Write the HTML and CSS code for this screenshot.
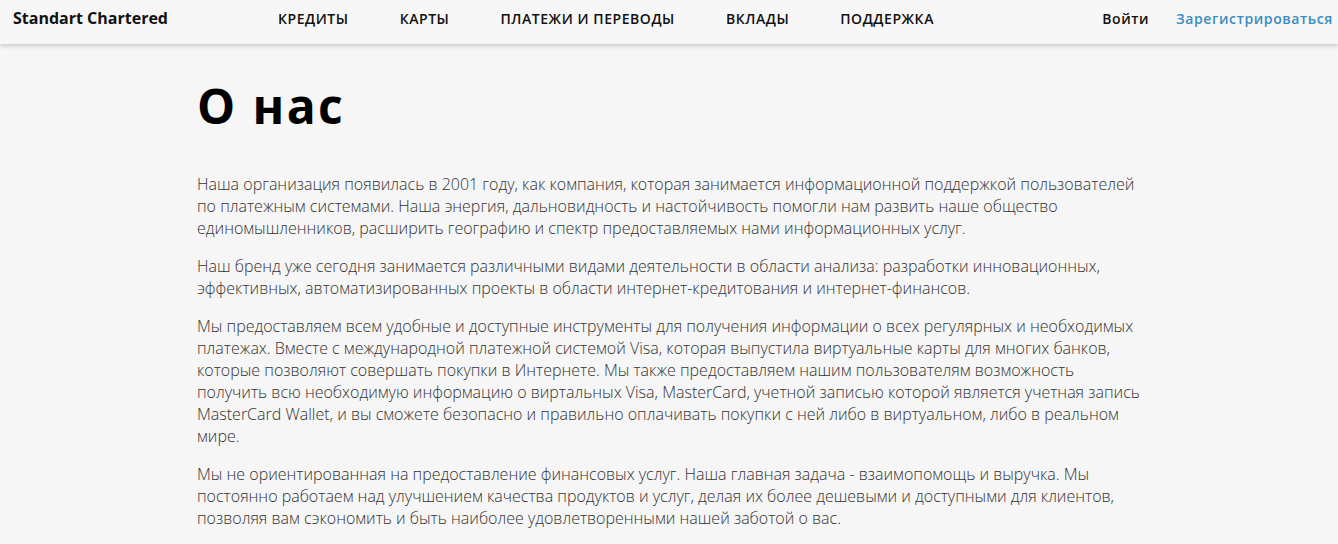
FILE: index.html
```html
<!DOCTYPE html>
<html lang="ru">
<head>
    <meta charset="UTF-8">
    <meta name="viewport" content="width=device-width, initial-scale=1.0">
    <title>О нас</title>
    <link rel="stylesheet" href="styles.css">
</head>
<body>
    <header class="header">
        <a class="logo" href="#">Standart Chartered</a>
        <nav class="nav">
            <a href="#">Кредиты</a>
            <a href="#">Карты</a>
            <a href="#">Платежи и переводы</a>
            <a href="#">Вклады</a>
            <a href="#">Поддержка</a>
        </nav>
        <div class="auth">
            <a class="login" href="#">Войти</a>
            <a class="register" href="#">Зарегистрироваться</a>
        </div>
    </header>

    <main class="about">
        <h1>О нас</h1>
        <p>Наша организация появилась в 2001 году, как компания, которая занимается информационной поддержкой пользователей по платежным системами. Наша энергия, дальновидность и настойчивость помогли нам развить наше общество единомышленников, расширить географию и спектр предоставляемых нами информационных услуг.</p>
        <p>Наш бренд уже сегодня занимается различными видами деятельности в области анализа: разработки инновационных, эффективных, автоматизированных проекты в области интернет-кредитования и интернет-финансов.</p>
        <p>Мы предоставляем всем удобные и доступные инструменты для получения информации о всех регулярных и необходимых платежах. Вместе с международной платежной системой Visa, которая выпустила виртуальные карты для многих банков, которые позволяют совершать покупки в Интернете. Мы также предоставляем нашим пользователям возможность получить всю необходимую информацию о виртальных Visa, MasterCard, учетной записью которой является учетная запись MasterCard Wallet, и вы сможете безопасно и правильно оплачивать покупки с ней либо в виртуальном, либо в реальном мире.</p>
        <p>Мы не ориентированная на предоставление финансовых услуг. Наша главная задача - взаимопомощь и выручка. Мы постоянно работаем над улучшением качества продуктов и услуг, делая их более дешевыми и доступными для клиентов, позволяя вам сэкономить и быть наиболее удовлетворенными нашей заботой о вас.</p>
    </main>
</body>
</html>
```

FILE: styles.css
```css
body {
    font-family: 'Open Sans', 'Noto Sans', sans-serif;
    background: #f6f6f6;
    color: #333;
    margin: 0;
}

a {
    text-decoration: none;
}

.header {
    height: 44px;
    box-sizing: border-box;
    display: flex;
    align-items: center;
    padding: 0 5px 8px 13px;
    background: #f7f7f7;
    box-shadow: 0 2px 4px rgba(0,0,0,0.18);
}

.logo {
    font-size: 16px;
    font-weight: 700;
    color: #111;
    width: 265px;
}

.nav {
    display: flex;
    gap: 51px;
    flex: 1;
}

.nav a {
    font-size: 14px;
    font-weight: 600;
    text-transform: uppercase;
    letter-spacing: 0.55px;
    color: #111;
}

.auth {
    display: flex;
    gap: 27px;
    font-size: 14px;
    font-weight: 600;
    letter-spacing: 0.6px;
}

.login {
    color: #111;
}

.register {
    color: #3a8dbf;
}

.about {
    max-width: 944px;
    margin: 0 auto;
    padding-top: 29px;
}

.about h1 {
    font-size: 48px;
    font-weight: 700;
    letter-spacing: 2.4px;
    color: #000;
    margin: 0 0 35px;
}

.about p {
    font-size: 16px;
    font-weight: 300;
    line-height: 22px;
    margin: 0 0 16px;
}
```
